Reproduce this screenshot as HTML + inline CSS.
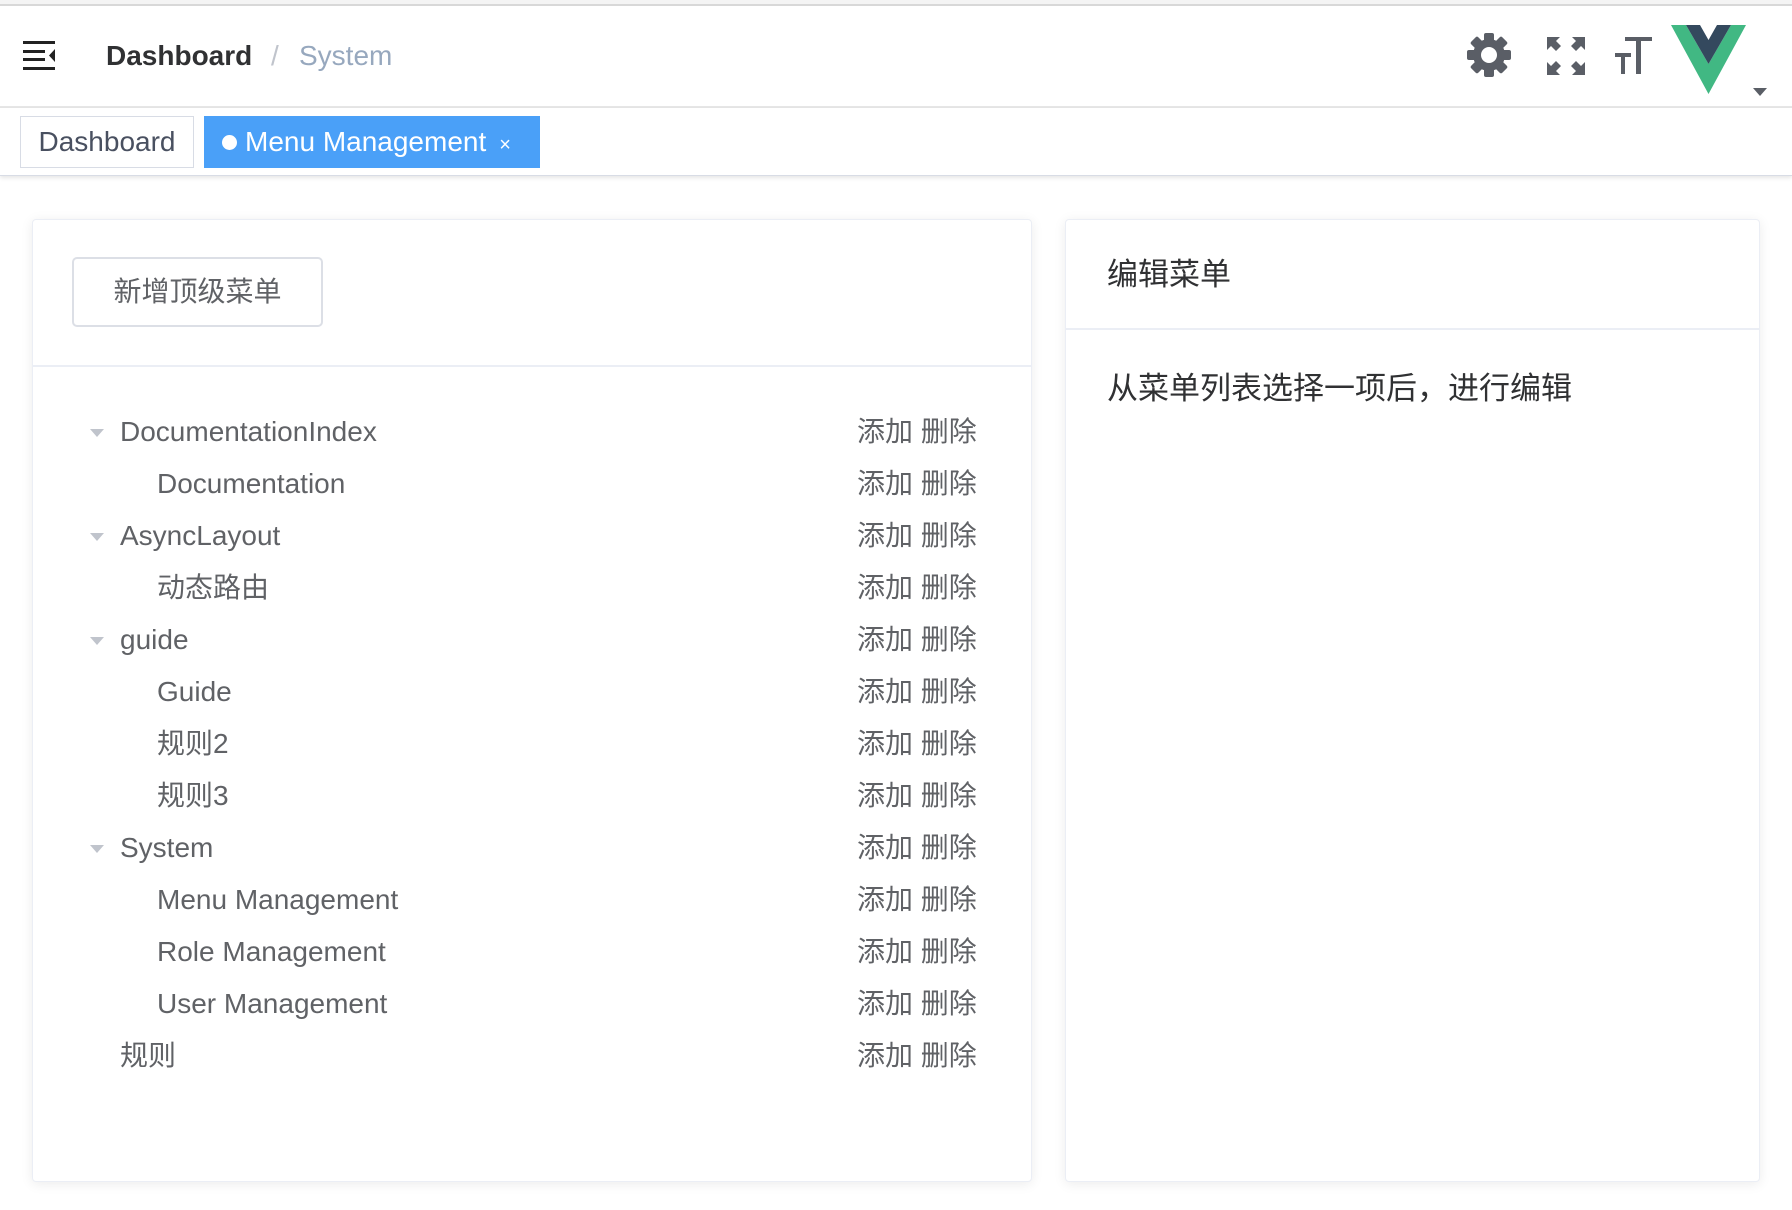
<!DOCTYPE html>
<html><head><meta charset="utf-8"><style>
*{margin:0;padding:0;box-sizing:border-box}
body{width:1792px;height:1210px;background:#fff;font-family:"Liberation Sans","Noto Sans CJK SC",sans-serif;position:relative;overflow:hidden;color:#606266}
.abs{position:absolute}
.topline{left:0;top:0;width:1792px;height:6px;background:#f4f4f4;border-bottom:2px solid #d8d8d8}
.nav{left:0;top:6px;width:1792px;height:102px;border-bottom:2px solid #e6e6e6}
.tags{left:0;top:108px;width:1792px;height:68px;border-bottom:1px solid #d8dce5;box-shadow:0 2px 4px rgba(0,0,0,.1)}
.card{background:#fff;border-radius:4px;border:1px solid #ebeef5;box-shadow:0 2px 12px rgba(0,0,0,.08)}
.row{position:absolute;height:52px;line-height:52px;font-size:28px;color:#606266;white-space:nowrap}
.act{position:absolute;left:857px;height:52px;line-height:52px;font-size:28px;color:#606266}
.tri{position:absolute;left:90px;width:0;height:0;border-left:7px solid transparent;border-right:7px solid transparent;border-top:8px solid #c0c4cc}
</style></head><body>
<div class="abs topline"></div>
<div class="abs nav"></div>
<svg class="abs" style="left:23px;top:41px" width="34" height="30" viewBox="0 0 34 30">
<rect x="0" y="0" width="32" height="3" fill="#222"/><rect x="0" y="9" width="22" height="3" fill="#222"/><rect x="0" y="17" width="22" height="3" fill="#222"/><rect x="0" y="26" width="32" height="3" fill="#222"/><polygon points="32,8 26,14.5 32,21" fill="#222"/></svg>
<div class="abs" style="left:106px;top:38px;font-size:28px;font-weight:bold;color:#303133;line-height:36px">Dashboard</div>
<div class="abs" style="left:271px;top:38px;font-size:28px;color:#c0c4cc;line-height:36px">/</div>
<div class="abs" style="left:299px;top:38px;font-size:28px;color:#97a8be;line-height:36px">System</div>
<svg class="abs" style="left:1466px;top:32px" width="46" height="46" viewBox="0 0 46 46">
<g fill="#5a5e66"><circle cx="23" cy="23" r="16"/>
<rect x="18" y="1" width="10" height="44" rx="2"/><rect x="1" y="18" width="44" height="10" rx="2"/>
<rect x="18" y="1" width="10" height="44" rx="2" transform="rotate(45 23 23)"/><rect x="18" y="1" width="10" height="44" rx="2" transform="rotate(-45 23 23)"/></g>
<circle cx="23" cy="23" r="8" fill="#fff"/></svg>
<svg class="abs" style="left:1547px;top:37px" width="38" height="38" viewBox="0 0 38 38" fill="#5a5e66">
<polygon points="0,0 13,0 9,4 14,9 9,14 4,9 0,13"/><polygon points="38,0 25,0 29,4 24,9 29,14 34,9 38,13"/>
<polygon points="0,38 13,38 9,34 14,29 9,24 4,29 0,25"/><polygon points="38,38 25,38 29,34 24,29 29,24 34,29 38,25"/></svg>
<svg class="abs" style="left:1615px;top:37px" width="38" height="38" viewBox="0 0 38 38" fill="#5a5e66">
<rect x="10" y="0" width="27" height="4"/><rect x="21" y="0" width="5" height="37"/>
<rect x="0" y="16" width="16" height="4"/><rect x="6" y="16" width="4" height="21"/></svg>
<svg class="abs" style="left:1671px;top:25px" width="75" height="70" viewBox="0 0 75 70">
<polygon points="0,0 15,0 37.5,39 60,0 75,0 37.5,69" fill="#41b883"/>
<polygon points="15,0 29,0 37.5,15 46,0 60,0 37.5,39" fill="#34495e"/></svg>
<div class="abs" style="left:1753px;top:88px;border-left:7px solid transparent;border-right:7px solid transparent;border-top:8px solid #5a5e66"></div>
<div class="abs tags"></div>
<div class="abs" style="left:20px;top:116px;width:174px;height:52px;border:1px solid #d8dce5;font-size:28px;line-height:50px;text-align:center;color:#495060">Dashboard</div>
<div class="abs" style="left:204px;top:116px;width:336px;height:52px;background:#4aa0f8;color:#fff;font-size:28px;line-height:52px;padding-left:18px;white-space:nowrap">
<span style="display:inline-block;width:15px;height:15px;border-radius:50%;background:#fff;vertical-align:1px;margin-right:8px"></span>Menu Management<span style="font-size:20px;margin-left:13px">×</span></div>
<div class="abs card" style="left:32px;top:219px;width:1000px;height:963px"></div>
<div class="abs" style="left:72px;top:257px;width:251px;height:70px;border:2px solid #dcdfe6;border-radius:5px;font-size:28px;line-height:66px;text-align:center;color:#606266">新增顶级菜单</div>
<div class="abs" style="left:33px;top:365px;width:998px;height:2px;background:#ebeef5"></div>
<div class="tri" style="top:429px"></div><div class="row" style="left:120px;top:406px">DocumentationIndex</div><div class="act" style="top:406px">添加 删除</div>
<div class="row" style="left:157px;top:458px">Documentation</div><div class="act" style="top:458px">添加 删除</div>
<div class="tri" style="top:533px"></div><div class="row" style="left:120px;top:510px">AsyncLayout</div><div class="act" style="top:510px">添加 删除</div>
<div class="row" style="left:157px;top:562px">动态路由</div><div class="act" style="top:562px">添加 删除</div>
<div class="tri" style="top:637px"></div><div class="row" style="left:120px;top:614px">guide</div><div class="act" style="top:614px">添加 删除</div>
<div class="row" style="left:157px;top:666px">Guide</div><div class="act" style="top:666px">添加 删除</div>
<div class="row" style="left:157px;top:718px">规则2</div><div class="act" style="top:718px">添加 删除</div>
<div class="row" style="left:157px;top:770px">规则3</div><div class="act" style="top:770px">添加 删除</div>
<div class="tri" style="top:845px"></div><div class="row" style="left:120px;top:822px">System</div><div class="act" style="top:822px">添加 删除</div>
<div class="row" style="left:157px;top:874px">Menu Management</div><div class="act" style="top:874px">添加 删除</div>
<div class="row" style="left:157px;top:926px">Role Management</div><div class="act" style="top:926px">添加 删除</div>
<div class="row" style="left:157px;top:978px">User Management</div><div class="act" style="top:978px">添加 删除</div>
<div class="row" style="left:120px;top:1030px">规则</div><div class="act" style="top:1030px">添加 删除</div>
<div class="abs card" style="left:1065px;top:219px;width:695px;height:963px"></div>
<div class="abs" style="left:1107px;top:255px;font-size:31px;line-height:40px;color:#303133">编辑菜单</div>
<div class="abs" style="left:1066px;top:328px;width:693px;height:2px;background:#ebeef5"></div>
<div class="abs" style="left:1107px;top:369px;font-size:31px;line-height:40px;color:#303133">从菜单列表选择一项后，进行编辑</div>
</body></html>
